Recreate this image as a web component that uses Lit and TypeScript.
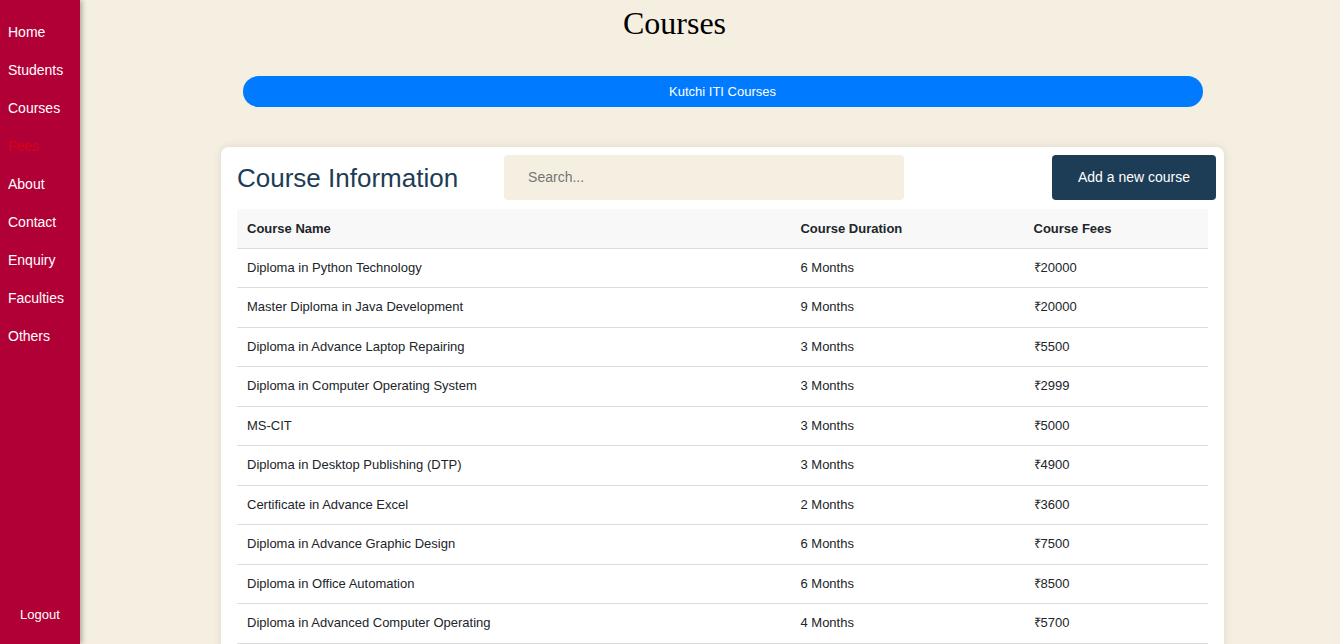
import { LitElement, html, css } from "lit";
import { customElement, state } from "lit/decorators.js";

interface Course {
  name: string;
  months: number;
  fees: number;
}

const LINKS = ["Home", "Students", "Courses", "Fees", "About", "Contact", "Enquiry", "Faculties", "Others"];

const COURSES: Course[] = [
  { name: "Diploma in Python Technology", months: 6, fees: 20000 },
  { name: "Master Diploma in Java Development", months: 9, fees: 20000 },
  { name: "Diploma in Advance Laptop Repairing", months: 3, fees: 5500 },
  { name: "Diploma in Computer Operating System", months: 3, fees: 2999 },
  { name: "MS-CIT", months: 3, fees: 5000 },
  { name: "Diploma in Desktop Publishing (DTP)", months: 3, fees: 4900 },
  { name: "Certificate in Advance Excel", months: 2, fees: 3600 },
  { name: "Diploma in Advance Graphic Design", months: 6, fees: 7500 },
  { name: "Diploma in Office Automation", months: 6, fees: 8500 },
  { name: "Diploma in Advanced Computer Operating", months: 4, fees: 5700 },
];

@customElement("side-nav")
export class SideNav extends LitElement {
  static styles = css`
    :host {
      display: flex;
      flex-direction: column;
      justify-content: space-between;
      box-sizing: border-box;
      flex: 0 0 80px;
      padding: 13px 0 12px;
      background: #b10036;
      box-shadow: 2px 0 5px rgba(0, 0, 0, 0.3);
      z-index: 1;
    }
    .links {
      display: flex;
      flex-direction: column;
    }
    .link {
      padding: 8px;
      font-size: 14px;
      line-height: 22px;
      color: #fff;
      text-decoration: none;
    }
    .current {
      color: #d90016;
    }
    .logout {
      padding: 8px;
      border: 0;
      background: none;
      color: #fff;
      font: 13px/18px "Liberation Sans", Arial, sans-serif;
      cursor: pointer;
    }
  `;

  render() {
    return html`
      <nav class="links">
        ${LINKS.map((l) => html`<a class="link ${l === "Fees" ? "current" : ""}" href="#${l.toLowerCase()}">${l}</a>`)}
      </nav>
      <button class="logout" type="button">Logout</button>
    `;
  }
}

@customElement("app-root")
export class AppRoot extends LitElement {
  @state() private query = "";

  static styles = css`
    :host {
      display: flex;
      height: 100vh;
      background: #f5efe1;
      color: #212529;
      font-family: "Liberation Sans", Arial, sans-serif;
    }
    .page {
      flex: 1;
      min-width: 0;
      overflow-y: auto;
      scrollbar-width: none;
    }
    .title {
      margin: 0 71px 0 0;
      padding-top: 4px;
      font: 32px/38px "Liberation Serif", "Times New Roman", serif;
      text-align: center;
      color: #000;
    }
    .content {
      margin: 34px 116px 0 141px;
    }
    .institute {
      display: block;
      width: 100%;
      max-width: 960px;
      margin: 0 auto 40px;
      padding: 6px 16px;
      border: 0;
      border-radius: 16px;
      background: #007bff;
      color: #fff;
      font: 13px/19px "Liberation Sans", Arial, sans-serif;
      cursor: pointer;
    }
    .card {
      padding: 8px 8px 32px;
      border-radius: 8px;
      background: #fff;
      box-shadow: 0 0 10px rgba(0, 0, 0, 0.1);
    }
    .bar {
      display: flex;
      align-items: center;
      gap: 46px;
      padding-left: 8px;
      margin-bottom: 9px;
    }
    .heading {
      margin: 0;
      font-size: 26px;
      font-weight: 400;
      line-height: 32px;
      white-space: nowrap;
      color: #1d3c55;
    }
    .search {
      flex: 0 1 400px;
      min-width: 0;
      box-sizing: border-box;
      padding: 12px 24px;
      border: 0;
      border-radius: 4px;
      background: #f5efe1;
      color: #212529;
      font: 14px/21px "Liberation Sans", Arial, sans-serif;
    }
    .search::placeholder {
      color: #757575;
    }
    .add {
      margin-left: auto;
      padding: 12px 26px;
      border: 0;
      border-radius: 4px;
      background: #1d3c55;
      color: #fff;
      font: 14px/21px "Liberation Sans", Arial, sans-serif;
      white-space: nowrap;
      cursor: pointer;
    }
    .frame {
      padding: 0 8px;
    }
    .table {
      width: 100%;
      table-layout: fixed;
      border-spacing: 0;
      font-size: 13px;
      line-height: 1.5;
      text-align: left;
    }
    .table th,
    .table td {
      border-bottom: 1px solid #dcdcdc;
    }
    .table th {
      padding: 10px 10px 9px;
      background: #f8f8f8;
    }
    .table td {
      padding: 9px 10px 10px;
    }
    .name {
      width: 57%;
    }
    .duration {
      width: 24%;
    }
  `;

  private onSearch(e: Event) {
    this.query = (e.target as HTMLInputElement).value;
  }

  render() {
    const rows = COURSES.filter((c) => c.name.toLowerCase().includes(this.query.toLowerCase()));
    return html`
      <side-nav></side-nav>
      <main class="page">
        <h1 class="title">Courses</h1>
        <div class="content">
          <button class="institute" type="button">Kutchi ITI Courses</button>
          <section class="card">
            <div class="bar">
              <h2 class="heading">Course Information</h2>
              <input class="search" type="text" aria-label="Search courses" placeholder="Search..." @input=${this.onSearch} />
              <button class="add" type="button">Add a new course</button>
            </div>
            <div class="frame">
              <table class="table">
                <colgroup>
                  <col class="name" />
                  <col class="duration" />
                  <col />
                </colgroup>
                <thead>
                  <tr>
                    <th scope="col">Course Name</th>
                    <th scope="col">Course Duration</th>
                    <th scope="col">Course Fees</th>
                  </tr>
                </thead>
                <tbody>
                  ${rows.map(
                    (c) => html`<tr>
                      <td>${c.name}</td>
                      <td>${c.months} Months</td>
                      <td>₹${c.fees}</td>
                    </tr>`
                  )}
                </tbody>
              </table>
            </div>
          </section>
        </div>
      </main>
    `;
  }
}
